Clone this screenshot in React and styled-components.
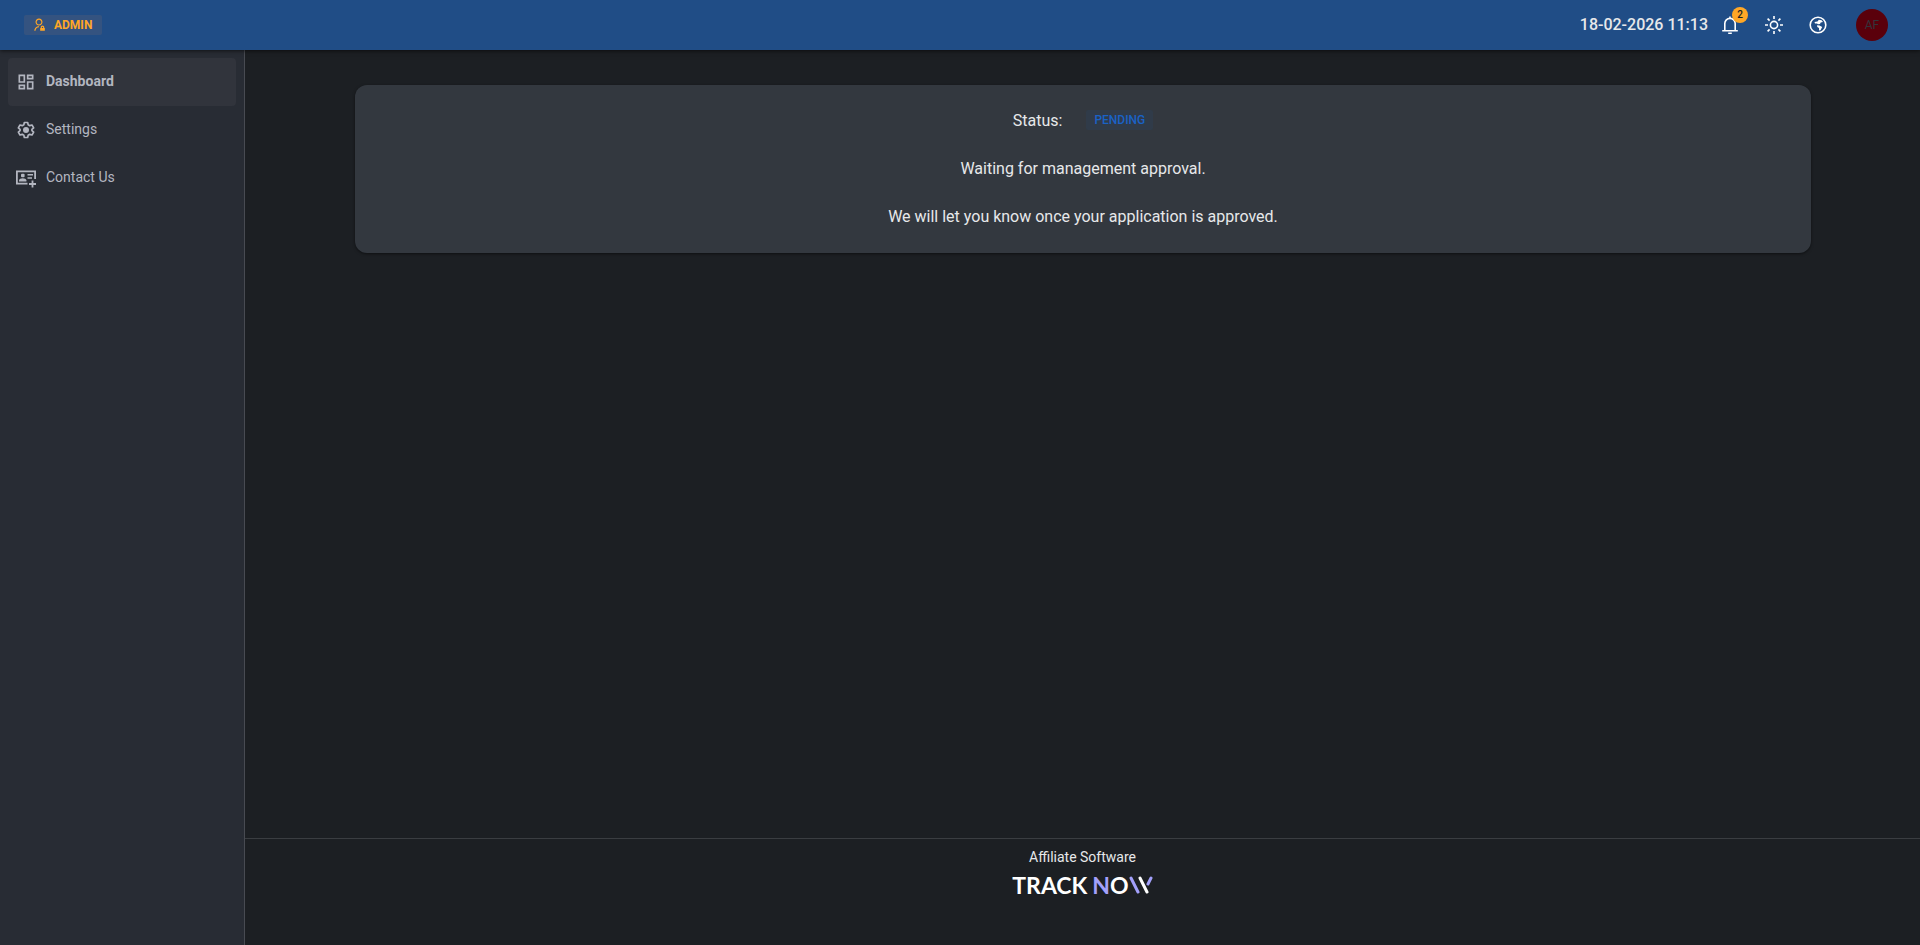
import React from 'react';
import styled, { createGlobalStyle } from 'styled-components';
import { RiAdminLine } from 'react-icons/ri';
import { MdOutlineDashboard } from 'react-icons/md';

const GlobalStyle = createGlobalStyle`
  * {
    box-sizing: border-box;
  }

  body {
    margin: 0;
    background: #1c1f23;
    color: #e7e8ea;
    font-family: Roboto, 'Liberation Sans', sans-serif;
    font-size: 14px;
  }

  button {
    border: 0;
    padding: 0;
    background: none;
    color: inherit;
    font: inherit;
    cursor: pointer;
  }
`;

const SettingsIcon = () => (
  <svg width="20" height="20" viewBox="0 0 24 24" fill="none" stroke="currentColor" strokeWidth="2" strokeLinejoin="round">
    <path d="M10 3h4l.6 2.7 1.9 1.1 2.700-.8 2 3.400-2.100 1.900v1.400l2.100 1.900-2 3.400-2.700-.8-1.900 1.100L14 21h-4l-.6-2.700-1.900-1.100-2.700.8-2-3.400 2.100-1.900v-1.400L2.800 9.400l2-3.400 2.700.8 1.900-1.100z" />
    <circle cx="12" cy="12" r="3.6" fill="currentColor" stroke="none" />
  </svg>
);

const ContactIcon = () => (
  <svg width="20" height="20" viewBox="0 0 20 20" fill="none" stroke="currentColor" strokeWidth="1.8">
    <path d="M11.5 15.6H.9V3.4h18.2V11" />
    <rect x="5" y="5.7" width="3.6" height="3.6" rx="1" fill="currentColor" stroke="none" />
    <path d="M3 13.5v-1.2c0-1.3 2-2 3.7-2s3.7.7 3.7 2v1.2z" fill="currentColor" stroke="none" />
    <path d="M11.5 6.8H17M11.5 10H16" strokeWidth="1.5" />
    <path d="M16.5 12.5v7M13 16h7" />
  </svg>
);

const BellIcon = () => (
  <svg width="18" height="18" viewBox="0 0 18 18" fill="none" stroke="currentColor" strokeWidth="1.6">
    <path d="M1.2 14.8h15.6M3.8 14.8V7.6a5.2 5.2 0 0 1 10.4 0v7.2" />
    <path d="M9 .4v2M7.2 17.2h3.6" />
  </svg>
);

const SunIcon = () => (
  <svg width="18" height="18" viewBox="0 0 18 18" fill="none" stroke="currentColor" strokeWidth="1.6">
    <circle cx="9" cy="9" r="3.6" />
    <path d="M9 0v3M9 15v3M0 9h3M15 9h3M2.6 2.6l2 2M13.4 13.4l2 2M2.6 15.4l2-2M13.4 4.6l2-2" />
  </svg>
);

const GlobeIcon = () => (
  <svg width="18" height="18" viewBox="0 0 18 18" fill="none" stroke="currentColor" strokeWidth="1.6">
    <circle cx="9" cy="9" r="7.8" />
    <path d="M5.5 6l3-.5 1.300-1.700 2.800.4 1.400 1.800-2.300.5-.7 1.500-2 .2-1-.8-2 .2z" fill="currentColor" stroke="none" />
    <path d="M8 9.200l2.500.3 2.700 1.500-1.700 3.300-1.500.2v-2.500l-1.700-1z" fill="currentColor" stroke="none" />
  </svg>
);

const navItems = [
  { label: 'Dashboard', icon: <MdOutlineDashboard size={20} />, active: true },
  { label: 'Settings', icon: <SettingsIcon /> },
  { label: 'Contact Us', icon: <ContactIcon /> },
];

const App = () => {
  return (
    <>
      <GlobalStyle />
      <Page>
        <Header>
          <AdminTag>
            <RiAdminLine size={14} />
            ADMIN
          </AdminTag>
          <Tools>
            <Clock>18-02-2026 11:13</Clock>
            <IconButton aria-label="Notifications">
              <BellIcon />
              <Badge>2</Badge>
            </IconButton>
            <IconButton aria-label="Theme">
              <SunIcon />
            </IconButton>
            <IconButton aria-label="Language">
              <GlobeIcon />
            </IconButton>
            <Avatar>AF</Avatar>
          </Tools>
        </Header>
        <Body>
          <Sidebar>
            {navItems.map((item) => (
              <NavLink href="#" key={item.label} $active={item.active}>
                {item.icon}
                <NavLabel>{item.label}</NavLabel>
              </NavLink>
            ))}
          </Sidebar>
          <Main>
            <Content>
              <Card>
                <Line>
                  Status:
                  <Status>PENDING</Status>
                </Line>
                <Line>Waiting for management approval.</Line>
                <Line>We will let you know once your application is approved.</Line>
              </Card>
            </Content>
            <Footer>
              Affiliate Software
              <Logo href="#" aria-label="Track Now">
                TRACK
                <LogoAccent>N</LogoAccent>O
                <svg width="24" height="18" viewBox="0 0 24 18" fill="none" strokeWidth="3" strokeLinecap="round">
                  <line x1="2" y1="2" x2="9" y2="16" stroke="#a3a0fb" />
                  <line x1="11" y1="2" x2="18" y2="16" stroke="#fff" />
                  <line x1="22" y1="2" x2="19" y2="8" stroke="#a3a0fb" />
                </svg>
              </Logo>
            </Footer>
          </Main>
        </Body>
      </Page>
    </>
  );
};

const Page = styled.div`
  display: flex;
  flex-direction: column;
  min-height: 100vh;
`;

const Header = styled.header`
  display: flex;
  align-items: center;
  justify-content: space-between;
  height: 50px;
  padding: 0 32px 0 24px;
  background: #204d86;
  box-shadow: 0 1px 4px rgba(0, 0, 0, 0.6);
  z-index: 1;
`;

const AdminTag = styled.div`
  display: flex;
  align-items: center;
  gap: 8px;
  height: 20px;
  padding: 0 10px 0 8px;
  border-radius: 2px;
  background: #345380;
  color: #ffa726;
  font-size: 12px;
  font-weight: 700;
`;

const Tools = styled.div`
  display: flex;
  align-items: center;
`;

const Clock = styled.time`
  padding-bottom: 2px;
  font-size: 16px;
  font-weight: 500;
`;

const IconButton = styled.button`
  position: relative;
  display: flex;
  align-items: center;
  justify-content: center;
  width: 44px;
  height: 44px;
  color: #fff;
`;

const Badge = styled.span`
  position: absolute;
  top: 4px;
  right: 4px;
  width: 16px;
  height: 16px;
  border-radius: 50%;
  background: #ffa726;
  color: #1c1f23;
  font-size: 10px;
  font-weight: 500;
  line-height: 16px;
`;

const Avatar = styled.button`
  width: 32px;
  height: 32px;
  margin-left: 16px;
  border-radius: 50%;
  background: #5a000b;
  color: #33343b;
  font-size: 12px;
`;

const Body = styled.div`
  display: flex;
  flex: 1;
`;

const Sidebar = styled.nav`
  width: 245px;
  padding: 8px;
  border-right: 1px solid #484b52;
  background: #282c34;
`;

const NavLink = styled.a`
  display: flex;
  align-items: center;
  gap: 10px;
  height: 48px;
  padding: 0 8px;
  border-radius: 4px;
  background: ${(props) => (props.$active ? '#31343c' : 'transparent')};
  color: #b3b6c0;
  font-weight: ${(props) => (props.$active ? 700 : 400)};
  text-decoration: none;
`;

const NavLabel = styled.span`
  padding-bottom: 2px;
`;

const Main = styled.div`
  display: flex;
  flex: 1;
  flex-direction: column;
`;

const Content = styled.main`
  flex: 1;
  padding: 35px 109px 0 110px;
`;

const Card = styled.section`
  padding: 11px 12px 13px;
  border-radius: 12px;
  background: #33383f;
  box-shadow: 0 1px 3px rgba(0, 0, 0, 0.5);
`;

const Line = styled.p`
  display: flex;
  align-items: center;
  justify-content: center;
  gap: 24px;
  height: 48px;
  margin: 0;
  font-size: 16px;
`;

const Status = styled.span`
  padding: 0 8px;
  border-radius: 2px;
  background: #303b49;
  color: #1a62c6;
  font-size: 12px;
  font-weight: 500;
  line-height: 20px;
`;

const Footer = styled.footer`
  display: flex;
  flex-direction: column;
  align-items: center;
  height: 107px;
  padding-top: 8px;
  border-top: 1px solid #3a3d41;
  line-height: 20px;
`;

const Logo = styled.a`
  display: flex;
  align-items: center;
  margin-top: 8px;
  color: #fff;
  font-family: Lato, sans-serif;
  font-size: 23px;
  font-weight: 700;
  text-decoration: none;
`;

const LogoAccent = styled.span`
  margin-left: 5px;
  color: #a3a0fb;
`;

export default App;
